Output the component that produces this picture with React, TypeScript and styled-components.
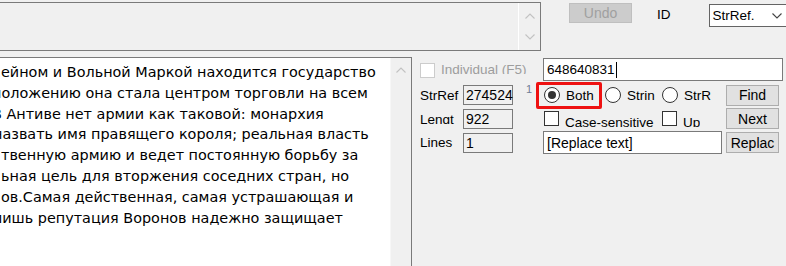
import React from 'react';
import styled, { createGlobalStyle } from 'styled-components';

const lines: { text: string; shift: number }[] = [
  { text: 'ейном и Вольной Маркой находится государство', shift: -1 },
  { text: 'положению она стала центром торговли на всем', shift: -10 },
  { text: 'В Антиве нет армии как таковой: монархия', shift: -10 },
  { text: 'назвать имя правящего короля; реальная власть', shift: -9 },
  { text: 'твенную армию и ведет постоянную борьбу за', shift: -1 },
  { text: 'ьная цель для вторжения соседних стран, но', shift: -1 },
  { text: 'ов.Самая действенная, самая устрашающая и', shift: -1 },
  { text: 'лишь репутация Воронов надежно защищает', shift: -9 },
];

const Chevron = ({ up, color = '#c2c2c2' }: { up?: boolean; color?: string }) => (
  <svg width="10" height="6" viewBox="0 0 10 6">
    <polyline
      points={up ? '0.5,5.5 5,1 9.5,5.5' : '0.5,0.5 5,5 9.5,0.5'}
      fill="none"
      stroke={color}
      strokeWidth="1.1"
    />
  </svg>
);

export default function App() {
  return (
    <>
      <GlobalStyle />
      <Screen>
        <TopRow>
          <InfoBox>
            <ScrollTrack>
              <Chevron up />
              <Chevron />
            </ScrollTrack>
          </InfoBox>
          <UndoButton disabled>Undo</UndoButton>
          <IdLabel>ID</IdLabel>
          <Select>
            <span>StrRef.</span>
            <Chevron color="#444" />
          </Select>
        </TopRow>

        <BottomRow>
          <Editor>
            <EditorText>
              {lines.map((l, i) => (
                <Line key={i} shift={l.shift}>
                  {l.text}
                </Line>
              ))}
            </EditorText>
            <EditorScroll>
              <Chevron up />
            </EditorScroll>
          </Editor>

          <Panel>
            <CheckItem col="1 / 4" width={110}>
              <Box disabled />
              <CheckText disabled clip>
                Individual (F5)
              </CheckText>
            </CheckItem>
            <SearchInput>
              648640831
              <Caret />
            </SearchInput>

            <FieldLabel>StrRef</FieldLabel>
            <FieldBox>274524</FieldBox>
            <Count>1</Count>
            <OptionRow>
              <Highlight />
              <RadioItem width={61}>
                <Radio checked />
                <CheckText>Both</CheckText>
              </RadioItem>
              <RadioItem width={57}>
                <Radio />
                <CheckText>Strin</CheckText>
              </RadioItem>
              <RadioItem width={49}>
                <Radio />
                <CheckText>StrR</CheckText>
              </RadioItem>
            </OptionRow>
            <Button>Find</Button>

            <FieldLabel>Lengt</FieldLabel>
            <FieldBox>922</FieldBox>
            <span />
            <OptionRow>
              <RadioItem width={118}>
                <Box />
                <CheckText clip>Case-sensitive</CheckText>
              </RadioItem>
              <RadioItem width={49}>
                <Box />
                <CheckText clip>Up</CheckText>
              </RadioItem>
            </OptionRow>
            <Button>Next</Button>

            <FieldLabel>Lines</FieldLabel>
            <FieldBox>1</FieldBox>
            <span />
            <ReplaceInput>[Replace text]</ReplaceInput>
            <Button>Replac</Button>
          </Panel>
        </BottomRow>
      </Screen>
    </>
  );
}

const GlobalStyle = createGlobalStyle`
  html, body {
    margin: 0;
    padding: 0;
    background: #f0f0f0;
  }
  body {
    font-family: "Liberation Sans", Arial, sans-serif;
    font-size: 13px;
    color: #000;
  }
  * {
    box-sizing: border-box;
  }
`;

const Screen = styled.div`
  width: 786px;
  height: 266px;
  overflow: hidden;
  display: flex;
  flex-direction: column;
  padding-top: 2px;
`;

const TopRow = styled.div`
  display: flex;
  align-items: flex-start;
  height: 49px;
  flex-shrink: 0;
`;

const InfoBox = styled.div`
  margin-left: -2px;
  width: 543px;
  height: 49px;
  flex-shrink: 0;
  border: 1px solid #7a7a7a;
  background: #f0f0f0;
  display: flex;
  justify-content: flex-end;
`;

const ScrollTrack = styled.div`
  width: 22px;
  border-left: 1px solid #ffffff;
  display: flex;
  flex-direction: column;
  align-items: center;
  justify-content: space-between;
  padding: 10px 0 10px;
`;

const UndoButton = styled.button`
  margin-left: 28px;
  margin-top: 1px;
  width: 63px;
  height: 20px;
  flex-shrink: 0;
  padding: 0;
  background: #cccccc;
  border: 1px solid #bfbfbf;
  color: #a0a0a0;
  font-family: inherit;
  font-size: 14px;
`;

const IdLabel = styled.span`
  margin-left: 25px;
  margin-top: 5px;
  font-size: 13.5px;
`;

const Select = styled.div`
  margin-left: 38px;
  margin-top: 2px;
  width: 81px;
  height: 23px;
  flex-shrink: 0;
  background: #fff;
  border: 1px solid #646464;
  display: flex;
  align-items: center;
  justify-content: space-between;
  padding: 0 7px 0 3px;
  font-size: 13.5px;
`;

const BottomRow = styled.div`
  display: flex;
  align-items: flex-start;
  margin-top: 6px;
`;

const Editor = styled.div`
  margin-left: -2px;
  width: 414px;
  height: 230px;
  flex-shrink: 0;
  border: 1px solid #7a7a7a;
  background: #fff;
  display: flex;
`;

const EditorText = styled.div`
  flex: 1;
  overflow: hidden;
  padding: 4px 0 0 3px;
  font-family: "DejaVu Sans", Verdana, sans-serif;
  font-size: 14.4px;
  line-height: 20.8px;
  white-space: nowrap;
`;

const Line = styled.div<{ shift: number }>`
  margin-left: ${({ shift }) => shift}px;
`;

const EditorScroll = styled.div`
  width: 21px;
  background: #f0f0f0;
  border-left: 1px solid #f7f7f7;
  display: flex;
  justify-content: center;
  padding-top: 9px;
`;

const Panel = styled.div`
  margin-left: 8px;
  margin-top: 1px;
  display: grid;
  grid-template-columns: 43px 50px 30px 179px 4px 57px;
  grid-template-rows: 24px 22px 21px 23px;
  row-gap: 2px;
`;

const CheckItem = styled.div<{ col: string; width: number }>`
  grid-column: ${({ col }) => col};
  width: ${({ width }) => width}px;
  display: flex;
  align-items: center;
  overflow: hidden;
`;

const RadioItem = styled.div<{ width: number }>`
  width: ${({ width }) => width}px;
  flex-shrink: 0;
  display: flex;
  align-items: center;
  overflow: hidden;
`;

const Box = styled.span<{ disabled?: boolean }>`
  width: 15px;
  height: 15px;
  flex-shrink: 0;
  background: #fff;
  border: 1px solid ${({ disabled }) => (disabled ? '#cccccc' : '#333333')};
`;

const Radio = styled.span<{ checked?: boolean }>`
  position: relative;
  width: 16px;
  height: 16px;
  flex-shrink: 0;
  border-radius: 50%;
  background: #fff;
  border: 1px solid #333333;

  &::after {
    content: '';
    display: ${({ checked }) => (checked ? 'block' : 'none')};
    position: absolute;
    left: 3px;
    top: 3px;
    width: 8px;
    height: 8px;
    border-radius: 50%;
    background: #333333;
  }
`;

const CheckText = styled.span<{ disabled?: boolean; clip?: boolean }>`
  margin-left: 6px;
  align-self: ${({ clip }) => (clip ? 'flex-start' : 'center')};
  margin-top: ${({ clip }) => (clip ? '3px' : '0')};
  height: ${({ clip }) => (clip ? '13px' : '16px')};
  line-height: 17px;
  overflow: hidden;
  white-space: nowrap;
  font-size: 13.5px;
  color: ${({ disabled }) => (disabled ? '#9d9d9d' : '#000')};
`;

const SearchInput = styled.div`
  grid-column: 4 / 7;
  height: 23px;
  background: #fff;
  border: 1px solid #7a7a7a;
  display: flex;
  align-items: center;
  padding-left: 3px;
  font-size: 13.5px;
`;

const Caret = styled.span`
  width: 1px;
  height: 16px;
  margin-left: 1px;
  background: #000;
`;

const FieldLabel = styled.div`
  margin-top: 3px;
  height: 13px;
  line-height: 17px;
  overflow: hidden;
  white-space: nowrap;
  font-size: 13.5px;
`;

const FieldBox = styled.div`
  align-self: center;
  height: 20px;
  background: #f0f0f0;
  border: 1px solid #7a7a7a;
  padding-left: 2px;
  line-height: 18px;
  font-size: 14px;
`;

const Count = styled.span`
  padding-left: 13px;
  font-size: 11px;
  line-height: 11px;
  color: #6f7d96;
`;

const OptionRow = styled.div`
  position: relative;
  display: flex;
  align-items: center;
  padding-left: 1px;
`;

const Highlight = styled.span`
  position: absolute;
  left: -7px;
  top: -2px;
  width: 66px;
  height: 27px;
  border: 3px solid #ee1111;
  border-radius: 2px;
  pointer-events: none;
`;

const ReplaceInput = styled.div`
  height: 23px;
  width: 179px;
  background: #fff;
  border: 1px solid #7a7a7a;
  display: flex;
  align-items: center;
  padding-left: 3px;
  font-size: 14px;
`;

const Button = styled.button`
  grid-column: 6;
  width: 53px;
  height: 21px;
  align-self: center;
  padding: 0;
  background: #e1e1e1;
  border: 1px solid #adadad;
  font-family: inherit;
  font-size: 14px;
  color: #000;
`;
